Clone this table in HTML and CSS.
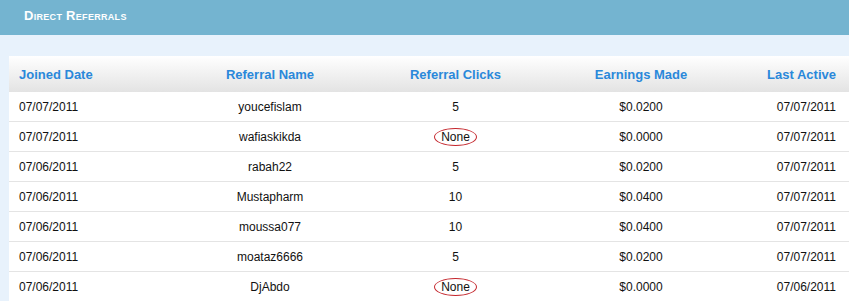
FILE: index.html
```html
<!DOCTYPE html>
<html>
<head>
<meta charset="utf-8">
<link rel="stylesheet" href="styles.css">
</head>
<body>
<div class="titlebar"><h1 class="title">Direct Referrals</h1></div>
<div class="panel">
  <div class="card">
    <div class="row head">
      <div class="c1">Joined Date</div><div class="c2">Referral Name</div><div class="c3">Referral Clicks</div><div class="c4">Earnings Made</div><div class="c5">Last Active</div>
    </div>
    <div class="row"><div class="c1">07/07/2011</div><div class="c2">youcefislam</div><div class="c3">5</div><div class="c4">$0.0200</div><div class="c5">07/07/2011</div></div>
    <div class="row"><div class="c1">07/07/2011</div><div class="c2">wafiaskikda</div><div class="c3"><span class="circled">None</span></div><div class="c4">$0.0000</div><div class="c5">07/07/2011</div></div>
    <div class="row"><div class="c1">07/06/2011</div><div class="c2">rabah22</div><div class="c3">5</div><div class="c4">$0.0200</div><div class="c5">07/07/2011</div></div>
    <div class="row"><div class="c1">07/06/2011</div><div class="c2">Mustapharm</div><div class="c3">10</div><div class="c4">$0.0400</div><div class="c5">07/07/2011</div></div>
    <div class="row"><div class="c1">07/06/2011</div><div class="c2">moussa077</div><div class="c3">10</div><div class="c4">$0.0400</div><div class="c5">07/07/2011</div></div>
    <div class="row"><div class="c1">07/06/2011</div><div class="c2">moataz6666</div><div class="c3">5</div><div class="c4">$0.0200</div><div class="c5">07/07/2011</div></div>
    <div class="row"><div class="c1">07/06/2011</div><div class="c2">DjAbdo</div><div class="c3"><span class="circled">None</span></div><div class="c4">$0.0000</div><div class="c5">07/06/2011</div></div>
  </div>
</div>
</body>
</html>
```
FILE: styles.css
```css
html, body {
  margin: 0;
  padding: 0;
  background: #e8f2fc;
  font-family: "Liberation Sans", Arial, sans-serif;
  overflow: hidden;
}
.titlebar {
  height: 35px;
  background: #74b4d0;
  box-sizing: border-box;
  padding: 8px 0 0 24px;
}
.title {
  margin: 0;
  font-size: 13px;
  font-weight: bold;
  font-variant: small-caps;
  color: #fff;
  letter-spacing: 0.3px;
  line-height: 16px;
}
.panel {
  padding: 21px 0 0 9px;
}
.card {
  background: #fff;
  width: 850px;
}
.row {
  display: grid;
  grid-template-columns: 158px 186px 185px 186px 102px;
  padding-left: 10px;
  height: 29px;
  align-items: center;
  border-bottom: 1px solid #e4e4e4;
  font-size: 12px;
  color: #111;
}
.row.head {
  height: 36px;
  border-bottom: none;
  background: linear-gradient(#ffffff, #e3e3e3);
  font-size: 13px;
  font-weight: bold;
  color: #2a88da;
}
.c1 { text-align: left; }
.c2, .c3, .c4 { text-align: center; }
.c5 { text-align: right; }
.circled {
  display: inline-block;
  border: 1px solid #c4262c;
  border-radius: 50%;
  padding: 0 6px;
  height: 16px;
  line-height: 16px;
  margin-top: 1px;
}
```
